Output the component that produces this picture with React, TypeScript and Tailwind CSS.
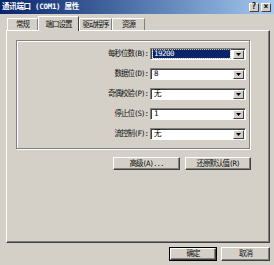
import React from 'react'

const font = {
  fontFamily: '"DejaVu Sans Mono", "Noto Sans CJK SC", monospace',
}

const fields = [
  { label: '每秒位数(B):', value: '19200', selected: true },
  { label: '数据位(D):', value: '8' },
  { label: '奇偶校验(P):', value: '无' },
  { label: '停止位(S):', value: '1' },
  { label: '流控制(F):', value: '无' },
]

const tabs = [
  { name: '常规', active: false, w: 'w-[31px]' },
  { name: '端口设置', active: true, w: 'w-[41px]' },
  { name: '驱动程序', active: false, w: 'w-[33px]' },
  { name: '资源', active: false, w: 'w-[33px]' },
]

const txt = 'text-[7.5px] leading-none tracking-[-1px]'

// little dropdown arrow button on the right of a combo
const DropButton = () => (
  <div className="w-[11px] h-[9px] bg-[#d4d0c8] border-t border-l border-t-white border-l-white border-b border-r border-b-[#404040] border-r-[#404040] flex items-center justify-center">
    <svg width="5" height="3" viewBox="0 0 5 3">
      <polygon points="0,0 5,0 2.5,3" fill="#000" />
    </svg>
  </div>
)

const Combo = ({ value, selected }: { value: string; selected?: boolean }) => (
  <div className="w-[96px] h-[12px] bg-white border-t border-l border-t-[#808080] border-l-[#808080] border-b border-r border-b-white border-r-white shadow-[inset_1px_1px_0_#404040] flex items-center pl-[2px] pr-[1px]">
    <div
      className={
        selected
          ? 'flex-1 h-[8px] mr-[3px] bg-[#0a246a] text-white text-[7.5px] leading-[8px] tracking-[-0.5px] pl-[1px] outline-1 outline-dotted outline-[#c0c0c0]'
          : 'flex-1 h-[8px] text-black text-[7.5px] leading-[8px] tracking-[-0.5px] pl-[1px]'
      }
    >
      {value}
    </div>
    <DropButton />
  </div>
)

const Button = ({
  children,
  className,
  primary,
}: {
  children: React.ReactNode
  className: string
  primary?: boolean
}) => (
  <div
    className={`${className} ${
      primary ? 'border border-black' : ''
    } bg-[#d4d0c8]`}
  >
    <div className={`w-full h-full border-t border-l border-t-white border-l-white border-b border-r border-b-[#404040] border-r-[#404040] shadow-[inset_-1px_-1px_0_#808080] flex items-center justify-center ${txt} text-[#111]`}>
      {children}
    </div>
  </div>
)

export default function App() {
  return (
    <div
      className="w-[274px] h-[265px] bg-[#d4d0c8] flex flex-col overflow-hidden"
      style={font}
    >
      {/* title bar */}
      <div className="h-[14px] bg-gradient-to-r from-[#0a246a] to-[#a6caf0] flex items-center justify-between pl-[2px] pr-[3px]">
        <span className="text-white font-bold text-[7.5px] leading-none tracking-[-0.3px]">
          通讯端口 (COM1) 属性
        </span>
        <div className="flex gap-[2px]">
          <div className="w-[10px] h-[9px] bg-[#d4d0c8] border-t border-l border-t-white border-l-white border-b border-r border-b-[#404040] border-r-[#404040] flex items-center justify-center text-[8px] font-bold leading-none">
            ?
          </div>
          <div className="w-[10px] h-[9px] bg-[#d4d0c8] border-t border-l border-t-white border-l-white border-b border-r border-b-[#404040] border-r-[#404040] flex items-center justify-center text-[8px] font-bold leading-none">
            ×
          </div>
        </div>
      </div>

      <div className="pl-[6px] pr-[4px] pt-[1px] flex flex-col">
        {/* tabs */}
        <div className="h-[15px] flex items-end pl-[1px]">
          {tabs.map((t) =>
            t.active ? (
              <div
                key={t.name}
                className={`${t.w} h-[15px] -mb-[1px] relative z-10 bg-[#d4d0c8] border-t border-l border-t-white border-l-white border-r border-r-[#404040] pt-[4px] ${txt} text-center text-[#111]`}
              >
                {t.name}
              </div>
            ) : (
              <div
                key={t.name}
                className={`${t.w} h-[12px] bg-[#d4d0c8] border-t border-l border-t-white border-l-white border-r border-r-[#808080] pt-[2px] ${txt} text-center text-[#111]`}
              >
                {t.name}
              </div>
            )
          )}
        </div>

        {/* tab panel */}
        <div className="h-[213px] border-t border-l border-t-white border-l-white border-b border-r border-b-[#404040] border-r-[#404040] shadow-[inset_-1px_-1px_0_#808080] pt-[9px] pl-[9px] flex flex-col">
          <div className="w-[234px] h-[109px] border border-[#808080] shadow-[1px_1px_0_#fff,inset_1px_1px_0_#fff] pt-[7px] flex flex-col gap-[8px]">
            {fields.map((f) => (
              <div key={f.label} className="flex items-center justify-end pr-[3px] gap-[2px]">
                <span className={`${txt} text-[#111]`}>{f.label}</span>
                <Combo value={f.value} selected={f.selected} />
              </div>
            ))}
          </div>
          <div className="flex gap-[5px] mt-[8px] pl-[97px]">
            <Button className="w-[67px] h-[13px]">高级(A)...</Button>
            <Button className="w-[66px] h-[13px]">还原默认值(R)</Button>
          </div>
        </div>

        {/* dialog buttons */}
        <div className="flex justify-end gap-[4px] mt-[4px] pr-0">
          <Button className="w-[48px] h-[14px]" primary>
            确定
          </Button>
          <Button className="w-[49px] h-[14px]">取消</Button>
        </div>
      </div>
    </div>
  )
}
